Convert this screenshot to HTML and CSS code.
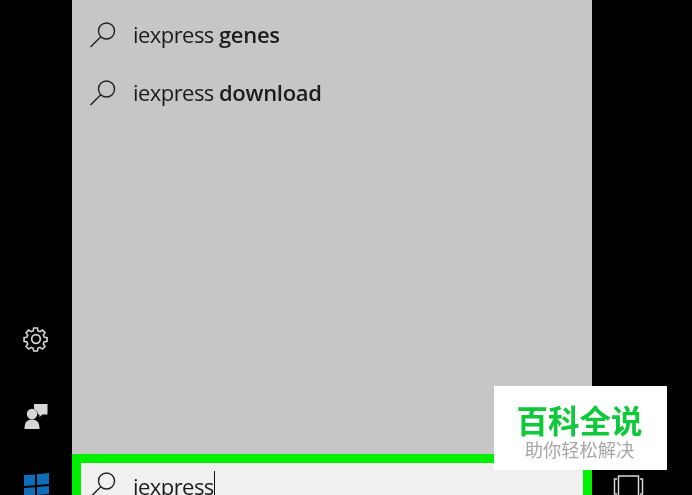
FILE: index.html
```html
<!DOCTYPE html>
<html lang="en">
<head>
<meta charset="utf-8">
<title>iexpress search</title>
<link rel="stylesheet" href="styles.css">
</head>
<body>
<div class="screen">
  <aside class="rail">
    <svg class="gear" viewBox="0 0 26 26" width="26" height="26"><path d="M11 1.5h4l.6 3.2 2.2.9 2.7-1.8 2.8 2.8-1.8 2.7.9 2.2 3.1.6v4l-3.1.6-.9 2.2 1.8 2.7-2.8 2.8-2.7-1.8-2.2.9-.6 3.1h-4l-.6-3.1-2.2-.9-2.7 1.8-2.8-2.8 1.8-2.7-.9-2.2-3.1-.6v-4l3.1-.6.9-2.2-1.8-2.7 2.8-2.8 2.7 1.8 2.2-.9z" transform="translate(13 13) scale(.92) translate(-13.5 -13.5)"/><circle cx="13" cy="13" r="4.3"/></svg>
    <svg class="person" viewBox="0 0 24 27" width="24" height="27"><path class="solid" d="M10 1h13.500v10.500h-5l-3 2.500v-2.500h-1.500a7 7 0 0 0-4-5.500z"/><circle class="solid" cx="8" cy="11" r="5.200"/><path class="solid" d="M.5 26c0-6 2-9.500 7.500-9.500s7.500 3.500 7.500 9.500z"/></svg>
    <div class="winlogo"><i></i><i></i><i></i><i></i></div>
  </aside>
  <main class="start">
    <section class="results">
      <div class="row">
        <svg class="lens" viewBox="0 0 28 28" width="28" height="28"><circle cx="17.500" cy="11" r="8"/><path d="M11.800 16.700 1.500 27"/></svg>
        <span>iexpress <b>genes</b></span>
      </div>
      <div class="row">
        <svg class="lens" viewBox="0 0 28 28" width="28" height="28"><circle cx="17.500" cy="11" r="8"/><path d="M11.800 16.700 1.500 27"/></svg>
        <span>iexpress <b>download</b></span>
      </div>
    </section>
    <section class="searchbox">
      <svg class="lens lens-box" viewBox="0 0 28 28" width="28" height="28"><circle cx="17.500" cy="11" r="8"/><path d="M11.800 16.700 1.500 27"/></svg>
      <span class="query">iexpress</span>
    </section>
  </main>
  <aside class="tray">
    <svg class="phone" viewBox="0 0 32 20" width="32" height="20"><path d="M5.500 1h20v24h-20zM4 4H1.500v15H4M27 4h2.500v15H27"/></svg>
  </aside>
  <div class="badge">
    <div class="badge-title">百科全说</div>
    <div class="badge-sub">助你轻松解决</div>
  </div>
</div>
</body>
</html>
```

FILE: styles.css
```css
* { box-sizing: border-box; }
html, body { margin: 0; height: 100%; }
body { background: #000; overflow: hidden; }
.screen {
  position: relative;
  display: grid;
  grid-template-columns: 72px 520px 100px;
  width: 692px;
  height: 495px;
  overflow: hidden;
  background: #000;
  font-family: "Open Sans", "Liberation Sans", sans-serif;
  filter: blur(.35px);
}
.rail {
  display: flex;
  flex-direction: column;
  align-items: center;
  height: 495px;
  justify-content: flex-end;
}
.gear { fill: none; stroke: #d8d8d8; stroke-width: 1.7; margin-bottom: 51px; }
.person { margin-bottom: 44px; }
.solid { fill: #d6d6d6; }
.winlogo {
  display: grid;
  grid-template-columns: 11px 12px;
  grid-auto-rows: 11px;
  gap: 2px;
  height: 21px;
  overflow: hidden;
  transform: skewY(-5deg);
}
.winlogo i { background: #0f6cb8; }
.start { display: flex; flex-direction: column; height: 495px; }
.results {
  flex: 1;
  background: #c6c6c6;
  padding-top: 5px;
}
.row {
  display: flex;
  align-items: center;
  gap: 16px;
  height: 58px;
  padding-left: 17px;
  color: #1c1c1c;
  font-size: 22px;
  letter-spacing: -.55px;
}
.row b { font-weight: 600; letter-spacing: -.3px; }
.lens { fill: none; stroke: #222; stroke-width: 1.400; flex: none; }
.lens-box { margin-top: -1px; }
.searchbox {
  display: flex;
  align-items: flex-start;
  gap: 16px;
  flex: none;
  height: 41px;
  border: 9.500px solid #00f000;
  border-bottom: 0;
  padding: 8px 0 0 8px;
  background: #f0f0f0;
  color: #1c1c1c;
  font-size: 22px;
  letter-spacing: -.55px;
  line-height: 30px;
}
.query { border-right: 1.500px solid #111; height: 30px; }
.tray { display: flex; align-items: flex-end; height: 495px; padding-left: 21px; }
.phone { fill: none; stroke: #d8d8d8; stroke-width: 1.500; }
.badge {
  position: absolute;
  left: 494px;
  top: 386px;
  width: 173px;
  height: 84px;
  background: #fff;
  text-align: center;
  font-family: "Noto Sans CJK SC", sans-serif;
}
.badge-title { margin-top: 16px; font-size: 31.500px; line-height: 34px; font-weight: 700; color: #0fc93a; padding-right: 2px; }
.badge-sub { font-size: 18.300px; line-height: 26px; color: #a6a6a6; padding-right: 2px; }
```
